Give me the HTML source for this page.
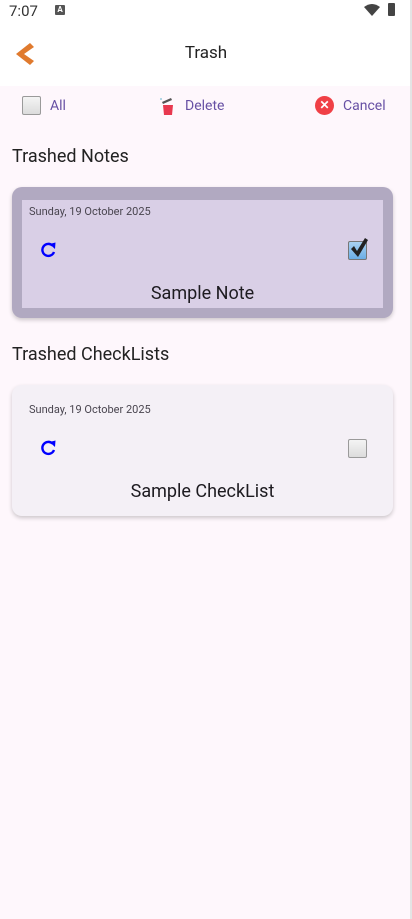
<!DOCTYPE html>
<html><head><meta charset="utf-8"><style>
*{margin:0;padding:0;box-sizing:border-box}
body{width:412px;height:919px;background:#fef7fc;font-family:"Roboto","Liberation Sans",sans-serif;position:relative;overflow:hidden;color:#1d1b20}
.abs{position:absolute}
.status{left:0;top:0;width:412px;height:24px;background:#fff}
.hdr{left:0;top:24px;width:412px;height:62px;background:#fff}
.card1{left:12px;top:187px;width:381px;height:131px;background:#b1a9c1;border-radius:10px;box-shadow:0 2px 4px rgba(0,0,0,.2)}
.in1{left:22px;top:200px;width:361px;height:108px;background:#d9cfe6}
.card2{left:12px;top:385px;width:381px;height:131px;background:#f4f0f6;border-radius:10px;box-shadow:0 2px 4px rgba(0,0,0,.2)}
.date{font-size:11px;color:#49454f}
.cb{width:19px;height:19px;border:1px solid #9a9a9a;border-radius:2px;background:linear-gradient(#f4f4f4,#dcdcdc)}
.title{font-size:18px;width:381px;text-align:center;left:12px}
</style></head><body>
<div class="abs status"></div>
<div class="abs" style="left:9px;top:2px;font-size:15px;color:#333">7:07</div>
<div class="abs" style="left:55px;top:5px;width:10px;height:10px;background:#555;border-radius:1px;color:#fff;font-size:8px;text-align:center;line-height:10px;font-weight:bold">A</div>
<svg class="abs" style="left:364px;top:4px" width="16" height="12" viewBox="0 0 16 12"><path d="M0 3 Q8 -3 16 3 L8 12 Z" fill="#444"/></svg>
<div class="abs" style="left:388px;top:3px;width:7px;height:13px;background:#444;border-radius:1px"></div>
<div class="abs hdr"></div>
<svg class="abs" style="left:14px;top:42px" width="22" height="24" viewBox="0 0 22 24"><path d="M16 1 L2 12 L16 23 L20 19 L10 12 L20 5 Z" fill="#e07a2e"/></svg>
<div class="abs" style="left:0;width:412px;top:43px;text-align:center;font-size:17px;color:#222">Trash</div>
<div class="abs cb" style="left:22px;top:96px"></div>
<div class="abs" style="left:50px;top:98px;font-size:14px;color:#6750a4">All</div>
<svg class="abs" style="left:158px;top:96px" width="20" height="20" viewBox="0 0 20 20"><path d="M4 6 L13 2 L14 4 L5 8Z" fill="#555"/><path d="M5 9 H15 L14 19 H6Z" fill="#e8384f"/><circle cx="3" cy="3" r="1" fill="#9cd"/></svg>
<div class="abs" style="left:185px;top:98px;font-size:14px;color:#6750a4">Delete</div>
<div class="abs" style="left:315px;top:96px;width:19px;height:19px;border-radius:50%;background:#f04046;color:#fff;font-size:12px;font-weight:bold;text-align:center;line-height:19px">✕</div>
<div class="abs" style="left:343px;top:98px;font-size:14px;color:#6750a4">Cancel</div>
<div class="abs" style="left:12px;top:146px;font-size:18px;color:#222">Trashed Notes</div>
<div class="abs card1"></div>
<div class="abs in1"></div>
<div class="abs date" style="left:29px;top:205px">Sunday, 19 October 2025</div>
<svg class="abs" style="left:39px;top:241px" width="18" height="18" viewBox="0 0 18 18"><path d="M13.5 4.5 A6 6 0 1 0 15 11" fill="none" stroke="#0000ff" stroke-width="2.4"/><path d="M10.5 3 L16.5 1.5 L16 8Z" fill="#0000ff"/></svg>
<div class="abs cb" style="left:348px;top:241px;background:linear-gradient(#a9d2f2,#6aaee6);border-color:#777"></div>
<svg class="abs" style="left:348px;top:237px" width="22" height="22" viewBox="0 0 22 22"><path d="M3 12 L6 9 L9 14 L17 1 L20 3 L10 20 Z" fill="#222"/></svg>
<div class="abs title" style="top:283px">Sample Note</div>
<div class="abs" style="left:12px;top:344px;font-size:18px;color:#222">Trashed CheckLists</div>
<div class="abs card2"></div>
<div class="abs date" style="left:29px;top:403px">Sunday, 19 October 2025</div>
<svg class="abs" style="left:39px;top:439px" width="18" height="18" viewBox="0 0 18 18"><path d="M13.5 4.5 A6 6 0 1 0 15 11" fill="none" stroke="#0000ff" stroke-width="2.4"/><path d="M10.5 3 L16.5 1.5 L16 8Z" fill="#0000ff"/></svg>
<div class="abs cb" style="left:348px;top:439px"></div>
<div class="abs title" style="top:481px">Sample CheckList</div>
<div class="abs" style="left:410px;top:0;width:2px;height:919px;background:#e4e4e4"></div>
</body></html>
